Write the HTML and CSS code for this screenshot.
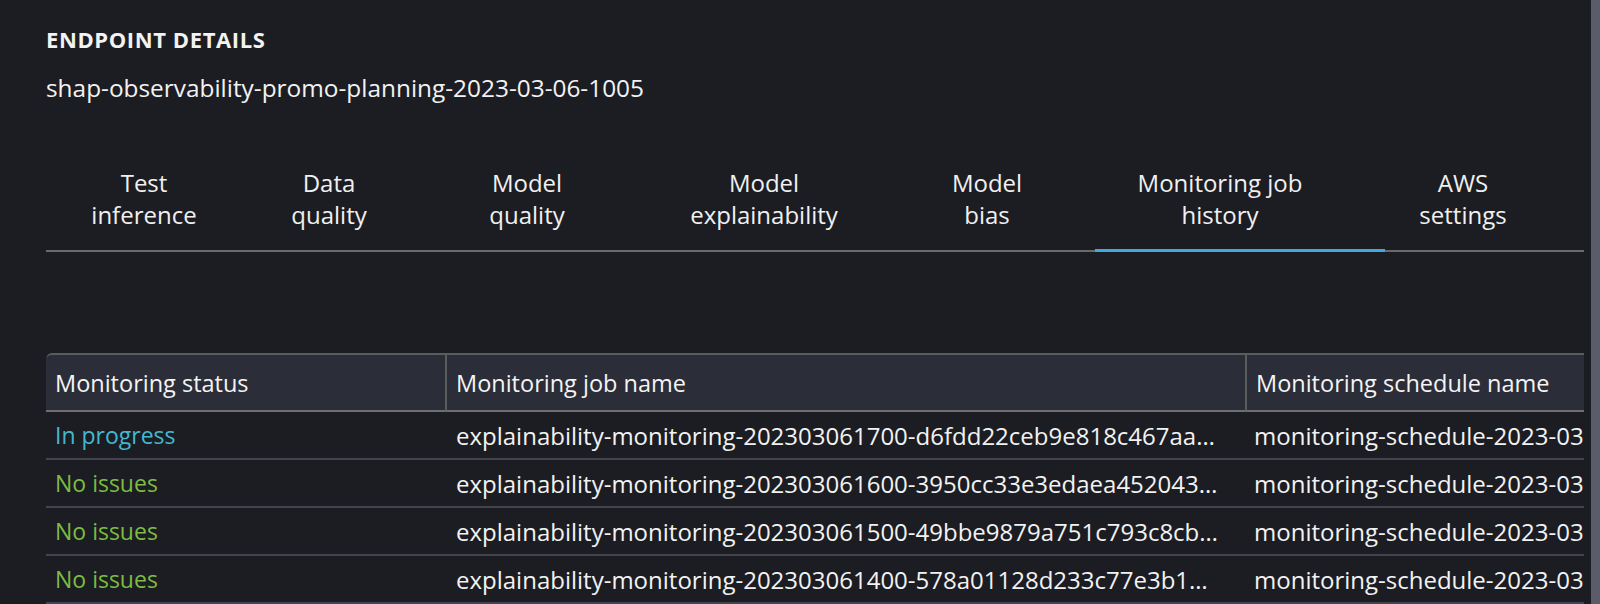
FILE: index.html
```html
<!DOCTYPE html>
<html lang="en">
<head>
<meta charset="utf-8">
<title>Endpoint details</title>
<link rel="stylesheet" href="styles.css">
</head>
<body>
<div class="page">
  <main class="main">
    <h1 class="title">ENDPOINT DETAILS</h1>
    <div class="endpoint-name">shap-observability-promo-planning-2023-03-06-1005</div>

    <nav class="tabs">
      <div class="tab t1"><span>Test<br>inference</span></div>
      <div class="tab t2"><span>Data<br>quality</span></div>
      <div class="tab t3"><span>Model<br>quality</span></div>
      <div class="tab t4"><span>Model<br>explainability</span></div>
      <div class="tab t5"><span>Model<br>bias</span></div>
      <div class="tab t6 active"><span>Monitoring job<br>history</span></div>
      <div class="tab t7"><span>AWS<br>settings</span></div>
    </nav>

    <div class="table-wrap">
      <table class="jobs">
        <thead>
          <tr>
            <th class="c1">Monitoring status</th>
            <th class="c2">Monitoring job name</th>
            <th class="c3">Monitoring schedule name</th>
          </tr>
        </thead>
        <tbody>
          <tr>
            <td class="c1 progress">In progress</td>
            <td class="c2"><div class="trunc">explainability-monitoring-202303061700-d6fdd22ceb9e818c467aa…</div></td>
            <td class="c3">monitoring-schedule-2023-03</td>
          </tr>
          <tr>
            <td class="c1 ok">No issues</td>
            <td class="c2"><div class="trunc">explainability-monitoring-202303061600-3950cc33e3edaea452043…</div></td>
            <td class="c3">monitoring-schedule-2023-03</td>
          </tr>
          <tr>
            <td class="c1 ok">No issues</td>
            <td class="c2"><div class="trunc">explainability-monitoring-202303061500-49bbe9879a751c793c8cb…</div></td>
            <td class="c3">monitoring-schedule-2023-03</td>
          </tr>
          <tr>
            <td class="c1 ok">No issues</td>
            <td class="c2"><div class="trunc">explainability-monitoring-202303061400-578a01128d233c77e3b1…</div></td>
            <td class="c3">monitoring-schedule-2023-03</td>
          </tr>
        </tbody>
      </table>
    </div>
  </main>
  <div class="scrollbar"></div>
</div>
</body>
</html>
```

FILE: styles.css
```css
html, body {
  margin: 0;
  padding: 0;
  height: 100%;
  overflow: hidden;
}
body {
  background: #1c1d22;
  color: #f2f2f2;
  font-family: "Open Sans", "Noto Sans", sans-serif;
}
.page {
  display: flex;
  height: 100%;
}
.main {
  flex: 1;
  min-width: 0;
  padding: 0 7px 0 46px;
}
.scrollbar {
  width: 9px;
  background: #5a5d69;
}
.title {
  margin: 0;
  padding-top: 27px;
  font-size: 22px;
  line-height: 24px;
  font-weight: 700;
  letter-spacing: 0.6px;
}
.endpoint-name {
  margin-top: 22px;
  font-size: 24.4px;
  line-height: 30px;
}
.tabs {
  display: flex;
  margin-top: 64px;
  border-bottom: 2px solid #6a6a6a;
}
.tab {
  box-sizing: border-box;
  text-align: center;
  font-size: 24px;
  line-height: 32px;
  padding-bottom: 19px;
  color: #f0f0f0;
}
.t1 { width: 207px; padding-right: 11px; }
.t2 { width: 152px; }
.t3 { width: 244px; }
.t4 { width: 230px; }
.t5 { width: 216px; }
.t6 { width: 290px; padding-right: 40px; }
.t7 { width: 199px; padding-right: 43px; }
.tab.active {
  box-shadow: inset 0 -3px 0 #45a6df;
  margin-bottom: -2px;
  padding-bottom: 21px;
}
.table-wrap {
  margin-top: 101px;
  overflow: hidden;
}
.jobs {
  border-collapse: separate;
  border-spacing: 0;
  width: 1800px;
  table-layout: fixed;
  font-size: 24px;
}
.jobs th {
  background: #2b2d39;
  font-weight: 400;
  font-size: 23.5px;
  text-align: left;
  height: 55px;
  padding: 0 9px;
  border-top: 2px solid #5b5c60;
  border-bottom: 2px solid #6e6e70;
  color: #f4f4f4;
}
.jobs th.c1 { border-top-left-radius: 6px; }
.jobs th + th { border-left: 2px solid #5c5c5e; }
.jobs td {
  height: 46px;
  padding: 0 9px;
  border-bottom: 2px solid #42454f;
  white-space: nowrap;
  overflow: hidden;
}
.c1 { width: 381px; }
.c2 { width: 780px; }
.c3 { width: 600px; }
.jobs td.c1 { font-size: 23px; }
.jobs td.c2 { padding-left: 11px; }
.trunc {
  overflow: hidden;
  text-overflow: ellipsis;
  white-space: nowrap;
  padding-right: 2px;
}
.progress { color: #44b7d2; }
.ok { color: #7cbc42; }
```
